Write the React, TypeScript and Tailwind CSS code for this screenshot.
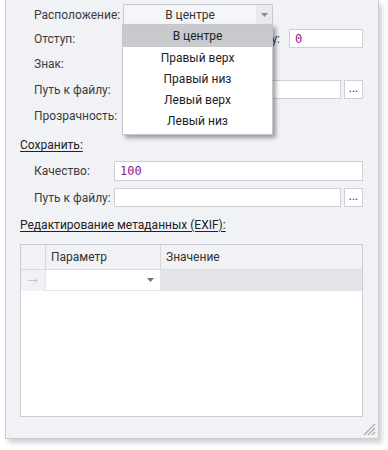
import React from "react";

const font = { fontFamily: 'Roboto, "Liberation Sans", sans-serif' };

function Label({ children, w }: { children: React.ReactNode; w: string }) {
  return <div className={`${w} shrink-0 text-[12px] text-[#3b3b3b] leading-none whitespace-nowrap`}>{children}</div>;
}

function Input({ className = "", children }: { className?: string; children?: React.ReactNode }) {
  return (
    <div className={`h-full bg-white border border-[#cdd0d7] flex items-center px-[5px] ${className}`}>
      {children}
    </div>
  );
}

function Dots() {
  return (
    <div className="w-[19px] h-full bg-white border border-[#cdd0d7] flex items-end justify-center pb-[4px] text-[12px] leading-none text-[#333] ml-[3px] shrink-0">
      ...
    </div>
  );
}

const mono = { fontFamily: '"DejaVu Sans Mono", "Liberation Mono", monospace' };

export default function App() {
  return (
    <div className="w-[388px] h-[450px] bg-white relative overflow-hidden" style={font}>
      <div className="ml-[5px] w-[374px] h-[439px] bg-[#f1f2f6] border-x border-b border-[#c9ccd3] shadow-[3px_4px_5px_rgba(0,0,0,0.18)] relative flex flex-col">
        <div className="mt-[4px] h-[21px] flex items-center pl-[28px] pr-[15px]">
          <Label w="w-[89px]">Расположение:</Label>
          <div className="w-[150px] h-full border border-[#c8cbd2] bg-[#f5f6f8] flex">
            <div className="flex-1 flex items-center justify-center text-[12px] text-[#333]">В центре</div>
            <div className="w-[16px] bg-[#e9eaee] flex items-center justify-center">
              <svg width="7" height="4" viewBox="0 0 7 4"><path d="M0 0h7L3.5 4z" fill="#8a8c92" /></svg>
            </div>
          </div>
        </div>
        <div className="mt-[4px] h-[19px] flex items-center pl-[28px] pr-[15px]">
          <Label w="w-[89px]">Отступ:</Label>
          <Input className="w-[100px]" />
          <div className="flex-1 text-right pr-[9px] text-[12px] text-[#3b3b3b] whitespace-nowrap">Отступ снизу:</div>
          <Input className="w-[74px] shrink-0">
            <span className="text-[12px] text-[#8b1a8b]" style={mono}>0</span>
          </Input>
        </div>
        <div className="mt-[6px] h-[19px] flex items-center pl-[28px] pr-[15px]">
          <Label w="w-[89px]">Знак:</Label>
        </div>
        <div className="mt-[7px] h-[19px] flex items-center pl-[28px] pr-[15px]">
          <Label w="w-[89px]">Путь к файлу:</Label>
          <Input className="flex-1" />
          <Dots />
        </div>
        <div className="mt-[7px] h-[19px] flex items-center pl-[28px] pr-[15px]">
          <Label w="w-[89px]">Прозрачность:</Label>
        </div>

        <div className="mt-[12px] h-[16px] flex items-center pl-[14px]">
          <span className="text-[12px] text-[#222] underline underline-offset-2 leading-none">Сохранить:</span>
        </div>
        <div className="mt-[8px] h-[20px] flex items-center pl-[28px] pr-[15px]">
          <Label w="w-[80px]">Качество:</Label>
          <Input className="flex-1">
            <span className="text-[12px] text-[#8b1a8b]" style={mono}>100</span>
          </Input>
        </div>
        <div className="mt-[7px] h-[19px] flex items-center pl-[28px] pr-[15px]">
          <Label w="w-[80px]">Путь к файлу:</Label>
          <Input className="flex-1" />
          <Dots />
        </div>

        <div className="mt-[10px] h-[16px] flex items-center pl-[14px]">
          <span className="text-[12px] text-[#222] underline underline-offset-2 leading-none">Редактирование метаданных (EXIF):</span>
        </div>
        <div className="mt-[11px] ml-[14px] mr-[15px] h-[173px] border border-[#c9ccd3] bg-white flex flex-col">
          <div className="h-[25px] flex bg-[#f0f2f5] border-b border-[#d6d8de]">
            <div className="w-[25px] border-r border-[#d6d8de]" />
            <div className="w-[115px] border-r border-[#d6d8de] flex items-center pl-[5px] text-[12px] text-[#333]">Параметр</div>
            <div className="flex-1 flex items-center pl-[5px] text-[12px] text-[#333]">Значение</div>
          </div>
          <div className="h-[21px] flex">
            <div className="w-[25px] bg-[#f0f2f5] border-r border-[#e3e5ea] flex items-center justify-center">
              <svg width="10" height="7" viewBox="0 0 10 7"><path d="M0 3.5h9M6 0.5l3 3-3 3" stroke="#c4c6cc" strokeWidth="1" fill="none" /></svg>
            </div>
            <div className="w-[115px] bg-white border-r border-b border-[#e3e5ea] flex items-center justify-end pr-[6px]">
              <svg width="7" height="4" viewBox="0 0 7 4"><path d="M0 0h7L3.5 4z" fill="#6f7177" /></svg>
            </div>
            <div className="flex-1 bg-[#e3e4e8]" />
          </div>
        </div>

        <svg className="absolute right-[2px] bottom-[2px]" width="13" height="13" viewBox="0 0 13 13">
          <path d="M12 1L1 12M12 5L5 12M12 9L9 12" stroke="#a9abb1" strokeWidth="1.2" />
        </svg>

        <div className="absolute left-[116px] top-[24px] w-[151px] bg-white border border-[#c3c6cc] shadow-[3px_3px_4px_rgba(0,0,0,0.35)] flex flex-col pb-[3px]">
          <div className="h-[22px] bg-[#c8c9cd] flex items-center justify-center text-[12px] text-[#222]">В центре</div>
          <div className="h-[21px] flex items-center justify-center text-[12px] text-[#222]">Правый верх</div>
          <div className="h-[21px] flex items-center justify-center text-[12px] text-[#222]">Правый низ</div>
          <div className="h-[21px] flex items-center justify-center text-[12px] text-[#222]">Левый верх</div>
          <div className="h-[21px] flex items-center justify-center text-[12px] text-[#222]">Левый низ</div>
        </div>
      </div>
    </div>
  );
}
